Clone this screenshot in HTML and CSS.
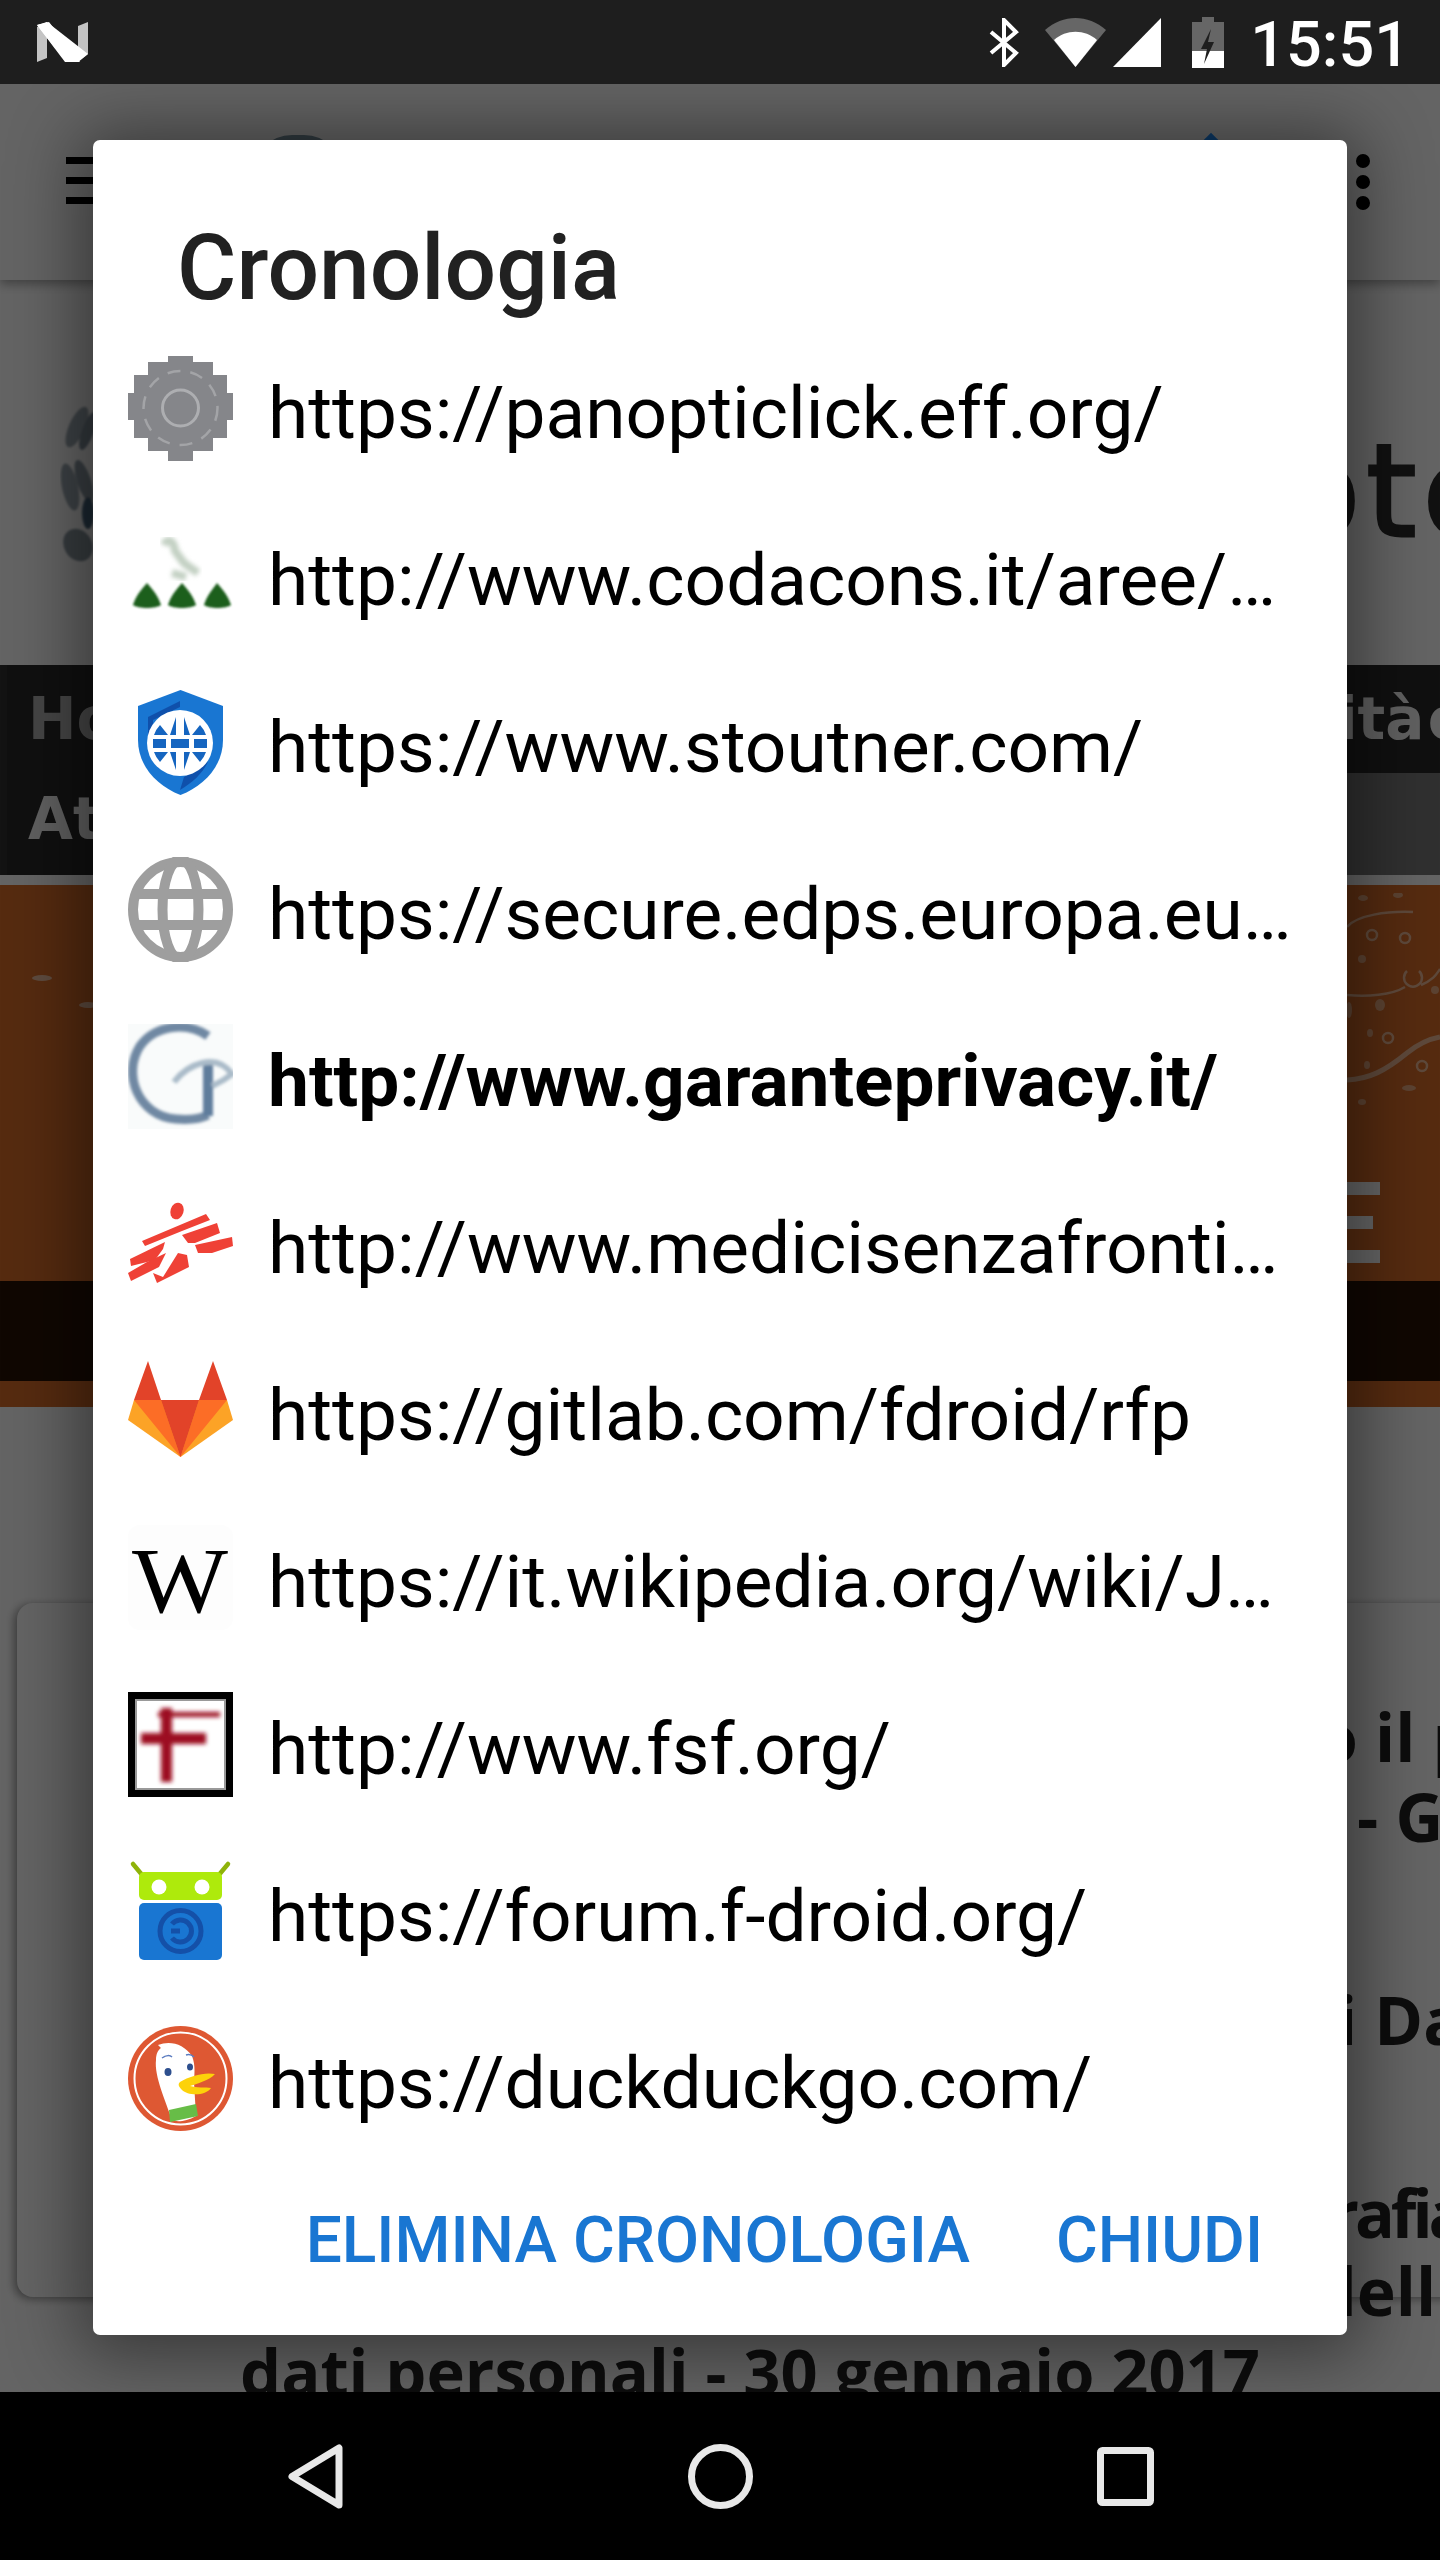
FILE: index.html
```html
<!DOCTYPE html>
<html lang="it">
<head>
<meta charset="utf-8">
<title>Cronologia</title>
<link rel="stylesheet" href="styles.css">
</head>
<body>
<header class="status">
  <svg class="st-n" viewBox="0 0 51 40"><path d="M0 5 10 0V36L0 40z" fill="#c4c4c4"/><path d="M41 4 51 0V32L41 40z" fill="#c4c4c4"/><path d="M0 3 10 0 51 32 41 40 28 40z" fill="#fff"/><path d="M0 3 12 0 43 40H29z" fill="#fff"/></svg>
  <div class="st-right">
    <svg class="st-bt" viewBox="0 0 30 49"><path d="M2 14 27 35 15 47V2l12 12L2 35" fill="none" stroke="#fff" stroke-width="4"/></svg>
    <svg class="st-wifi" viewBox="0 0 61 49"><path d="M0 12C18-4 43-4 61 12L30.500 49z" fill="#666"/><path d="M9 22C21 11 40 11 52 22L30.500 49z" fill="#fff"/></svg>
    <svg class="st-sig" viewBox="0 0 48 49"><path d="M48 0V49H0z" fill="#fff"/></svg>
    <svg class="st-bat" viewBox="0 0 32 51"><path d="M10 0h12v5h10v46H0V5h10z" fill="#666"/><path d="M0 34h32v17H0z" fill="#fff"/><path d="M19 12 9 32h6l-3 15 10-22h-6l3-13z" fill="#1e1e1e"/></svg>
    <span class="st-time">15:51</span>
  </div>
</header>

<main class="page">
  <div class="appbar">
    <div class="burger"><i></i><i></i><i></i></div>
    <span class="peek-logo"></span>
    <span class="peek-pin"></span>
    <div class="dots"><i></i><i></i><i></i></div>
  </div>
  <div class="brand">
    <svg class="emblem" viewBox="0 0 33 175"><defs><filter id="b0"><feGaussianBlur stdDeviation="1.200"/></filter></defs><g filter="url(#b0)" fill="#8a98a2"><ellipse cx="17" cy="32" rx="8" ry="22" transform="rotate(24 17 32)"/><ellipse cx="28" cy="36" rx="6" ry="20" transform="rotate(20 28 36)" fill="#6a7c8a"/><ellipse cx="10" cy="92" rx="8" ry="24" transform="rotate(-12 10 92)"/><ellipse cx="24" cy="86" rx="7" ry="22" transform="rotate(-18 24 86)" fill="#7a8a96"/><ellipse cx="28" cy="118" rx="6" ry="16" fill="#254a66"/><ellipse cx="18" cy="150" rx="14" ry="17" transform="rotate(-30 18 150)" fill="#76858f"/></g></svg>
    <div class="brand-text">ote</div>
  </div>
  <nav class="menu">
    <div class="menu-row"><span class="menu-home">Ho</span><span class="menu-end">vità e</span></div>
    <div class="menu-row menu-row-2"><span>Att</span></div>
  </nav>
  <div class="banner">
    <svg class="swirl-left" viewBox="0 0 93 60"><g fill="#fff" opacity=".55"><ellipse cx="42" cy="8" rx="10" ry="3"/><ellipse cx="88" cy="35" rx="9" ry="3"/></g></svg>
    <svg class="swirl" viewBox="0 0 93 240"><g fill="none" stroke="#fff" stroke-opacity=".5" stroke-width="2.500"><path d="M0 34C10 22 40 18 66 19"/><path d="M0 102C20 104 45 102 58 94"/><path d="M74 92C88 86 90 80 93 76"/><path d="M0 187C22 186 38 178 60 160 70 152 82 146 93 144" stroke-width="5"/><path d="M72 78A9 9 0 1 1 60 78" /><circle cx="25" cy="42" r="5"/><circle cx="58" cy="45" r="5"/><circle cx="41" cy="145" r="5"/><circle cx="75" cy="173" r="5"/></g><g fill="#fff" opacity=".4"><ellipse cx="16" cy="5" rx="5" ry="3"/><ellipse cx="51" cy="2" rx="5" ry="3"/><circle cx="15" cy="66" r="4"/><circle cx="88" cy="97" r="4"/><ellipse cx="33" cy="112" rx="5" ry="6"/><ellipse cx="2" cy="117" rx="3" ry="8"/><ellipse cx="23" cy="140" rx="3" ry="4"/><ellipse cx="20" cy="172" rx="3" ry="4"/><ellipse cx="62" cy="195" rx="7" ry="3"/><ellipse cx="15" cy="209" rx="4" ry="3"/></g></svg>
    <div class="e-bars"><i></i><i class="short"></i><i></i></div>
    <div class="banner-band"></div>
  </div>
  <section class="card">
    <p class="c1">o il p</p>
    <p class="c2">- G</p>
    <p class="c3">i Da</p>
    <p class="c4">rafia</p>
    <p class="c5">dell</p>
  </section>
  <p class="after">dati personali - 30 gennaio 2017</p>

  <div class="scrim">
    <div class="dialog">
      <h1 class="dlg-title">Cronologia</h1>
      <ul class="list">
        <li class="row">
          <svg class="ico" viewBox="0 0 105 105"><path d="M40 0h25v6h20v13h14v18h6v27h-6v18H85v13H65v10H40V95H20V82H6V64H0V37h6V19h14V6h20z" fill="#85868a"/><circle cx="52.500" cy="52" r="18" fill="none" stroke="#adaeb1" stroke-width="3"/><circle cx="52.500" cy="52" r="37" fill="none" stroke="#a3a4a7" stroke-width="2.500" stroke-dasharray="13 10"/></svg>
          <span class="url">https://panopticlick.eff.org/</span>
        </li>
        <li class="row">
          <svg class="ico" viewBox="0 0 105 105"><defs><filter id="b1"><feGaussianBlur stdDeviation="1"/></filter><filter id="b1b"><feGaussianBlur stdDeviation="2"/></filter></defs><g filter="url(#b1)" fill="#1e5e1e"><path d="M5 82C8 72 14 66 19 60 24 66 30 72 33 82 28 86 10 86 5 82z"/><path d="M40 82C43 72 49 66 54 60 59 66 65 72 68 82 63 86 45 86 40 82z"/><path d="M76 82C79 72 85 66 89 60 94 66 100 72 103 82 98 86 81 86 76 82z"/></g><g filter="url(#b1b)" fill="none" stroke="#c3d0c3" stroke-width="8"><path d="M36 22C40 14 46 18 47 28L56 40 70 50"/><path d="M44 50 58 54"/></g></svg>
          <span class="url">http://www.codacons.it/aree/…</span>
        </li>
        <li class="row">
          <svg class="ico" viewBox="0 0 105 105"><path d="M52.500 0 95 16V50C95 76 76 96 52.500 105 29 96 10 76 10 50V16z" fill="#1976d2"/><path d="M52 11 20 27V52H25V30L52 17zM52 100 56 87 80 72C74 84 64 93 52 100z" fill="#0d47a1" opacity=".8"/><circle cx="52" cy="53" r="33" fill="#fff"/><g fill="#1565c0"><path d="M26 45a27 27 0 0 1 6-10l8 10zM48 45V27L42 45zM56 45V27l6 18zM78 45a27 27 0 0 0-6-10l-8 10z"/><rect x="25" y="49" width="13" height="9"/><rect x="43" y="49" width="18" height="9"/><rect x="66" y="49" width="13" height="9"/><path d="M26 62a27 27 0 0 0 6 10l8-10zM48 62v18l-6-18zM56 62v18l6-18zM78 62a27 27 0 0 1-6 10l-8-10z"/></g></svg>
          <span class="url">https://www.stoutner.com/</span>
        </li>
        <li class="row">
          <svg class="ico" viewBox="0 0 105 105"><g fill="none" stroke="#9e9e9e" stroke-width="10"><circle cx="52.500" cy="52.500" r="47.500"/><ellipse cx="52.500" cy="52.500" rx="18" ry="50"/><path d="M8 37H97M8 68H97"/></g></svg>
          <span class="url">https://secure.edps.europa.eu…</span>
        </li>
        <li class="row">
          <svg class="ico" viewBox="0 0 105 105"><defs><filter id="b2"><feGaussianBlur stdDeviation="1.800"/></filter></defs><rect width="105" height="105" fill="#f9fbfb"/><g filter="url(#b2)" fill="none"><path d="M80 12C60-2 28 0 12 22-6 50 10 92 48 95c12 1 24 0 32-4" stroke="#6f88a3" stroke-width="9"/><path d="M80 40V92" stroke="#5f7d9c" stroke-width="10"/><path d="M46 58C60 40 88 28 104 50 94 58 88 60 84 62" stroke="#aabbc9" stroke-width="6"/></g></svg>
          <span class="url url-current">http://www.garanteprivacy.it/</span>
        </li>
        <li class="row">
          <svg class="ico" viewBox="0 0 105 105"><g fill="#ef4136"><ellipse cx="49" cy="20" rx="6.500" ry="8.500" transform="rotate(18 49 20)"/><path d="M14 50 78 23 82 29 54 40 17 55z"/><path d="M54 44 89 32 92 42 67 52 60 52z"/><path d="M67 54 104 46 105 55 84 62 70 62z"/><path d="M2 68 37 51 35 58 27 69 3 75z"/><path d="M0 82 19 71 38 62 31 76 3 90z"/><path d="M25 82 35 86 50 62 59 64 61 76 29 92z"/></g></svg>
          <span class="url">http://www.medicisenzafronti…</span>
        </li>
        <li class="row">
          <svg class="ico" viewBox="0 0 105 105"><path d="M0 62 6 42H99L105 62 52.500 99z" fill="#fca326"/><path d="M6 42H33L52.500 99zM99 42H71L52.500 99z" fill="#fc6d26"/><path d="M6 42 20 3 33 42zM99 42 85 3 71 42zM33 42H71L52.500 99z" fill="#e24329"/></svg>
          <span class="url">https://gitlab.com/fdroid/rfp</span>
        </li>
        <li class="row">
          <svg class="ico" viewBox="0 0 105 105"><rect width="105" height="105" rx="12" fill="#fdfdfd"/><text class="wiki" x="4" y="87" textLength="96" lengthAdjust="spacingAndGlyphs">W</text></svg>
          <span class="url">https://it.wikipedia.org/wiki/J…</span>
        </li>
        <li class="row">
          <svg class="ico" viewBox="0 0 105 105"><defs><filter id="b3"><feGaussianBlur stdDeviation="2"/></filter></defs><rect width="105" height="105" fill="#fff"/><rect x="8" y="8" width="89" height="89" fill="none" stroke="#999" stroke-width="2"/><rect x="3.500" y="3.500" width="98" height="98" fill="none" stroke="#000" stroke-width="7"/><g fill="#9c0f24" filter="url(#b3)"><rect x="30" y="20" width="62" height="5"/><rect x="13" y="41" width="65" height="11"/><rect x="33" y="16" width="11" height="74"/></g></svg>
          <span class="url">http://www.fsf.org/</span>
        </li>
        <li class="row">
          <svg class="ico" viewBox="0 0 105 105"><g stroke="#8fb30a" stroke-width="4.500" stroke-linecap="round"><path d="M5 5 15 17M100 5 90 17"/></g><rect x="11" y="13" width="83" height="28" rx="5" fill="#aeea0c"/><circle cx="31" cy="28" r="7.500" fill="#fff"/><circle cx="74" cy="28" r="7.500" fill="#fff"/><rect x="11" y="44" width="83" height="57" rx="5" fill="#1976d2"/><circle cx="52.500" cy="72" r="20.500" fill="none" stroke="#1450a8" stroke-width="5"/><path d="M44 65A11 11 0 1 1 44 79M43 72H52" fill="none" stroke="#1450a8" stroke-width="5"/></svg>
          <span class="url">https://forum.f-droid.org/</span>
        </li>
        <li class="row">
          <svg class="ico" viewBox="0 0 105 105"><circle cx="52.500" cy="52.500" r="52.500" fill="#de5833"/><circle cx="52.500" cy="52.500" r="46" fill="none" stroke="#fff" stroke-width="2"/><path d="M30 19C42 14 56 18 64 30 68 40 66 50 66 56L68 90C58 96 48 96 44 94 38 76 26 50 28 34 28 28 30 24 33 22z" fill="#fff"/><ellipse cx="40" cy="46" rx="3.500" ry="4" fill="#2d4f8e"/><ellipse cx="62" cy="41" rx="3" ry="3.500" fill="#2d4f8e"/><path d="M34 32C38 29 42 29 44 31M58 29C61 28 64 29 66 31" fill="none" stroke="#5b7cc0" stroke-width="1.500"/><path d="M52 56C62 50 76 46 87 48 82 54 68 58 62 60 68 62 78 61 83 62 78 70 60 70 54 64 50 60 50 58 52 56z" fill="#fdd20a"/><path d="M41 84 68 78 70 90 42 96z" fill="#67bd47"/></svg>
          <span class="url">https://duckduckgo.com/</span>
        </li>
      </ul>
      <div class="actions">
        <span class="btn">ELIMINA CRONOLOGIA</span>
        <span class="btn">CHIUDI</span>
      </div>
    </div>
  </div>
</main>

<footer class="navbar">
  <svg class="nv-back" viewBox="0 0 55 65"><path d="M51 4V61L4 32.500z" fill="none" stroke="#e8e8e8" stroke-width="7" stroke-linejoin="round"/></svg>
  <svg class="nv-home" viewBox="0 0 65 65"><circle cx="32.500" cy="32.500" r="29" fill="none" stroke="#e8e8e8" stroke-width="7"/></svg>
  <svg class="nv-rect" viewBox="0 0 57 59"><rect x="3.500" y="3.500" width="50" height="52" rx="2" fill="none" stroke="#e8e8e8" stroke-width="7"/></svg>
</footer>
</body>
</html>
```

FILE: styles.css
```css
* { box-sizing: border-box; }
html, body { margin: 0; padding: 0; }
body {
  width: 1440px;
  height: 2560px;
  overflow: hidden;
  display: flex;
  flex-direction: column;
  font-family: Roboto, "Liberation Sans", sans-serif;
  background: #000;
}

/* status bar */
.status {
  height: 84px;
  flex: none;
  background: #1e1e1e;
  display: flex;
  align-items: center;
  justify-content: space-between;
  padding: 0 30px 0 37px;
}
.st-n { width: 51px; height: 40px; margin-top: -1px; }
.st-right { display: flex; align-items: center; }
.st-bt { width: 30px; height: 49px; margin-right: 26px; }
.st-wifi { width: 61px; height: 49px; margin-right: 7px; }
.st-sig { width: 48px; height: 49px; margin-right: 31px; }
.st-bat { width: 32px; height: 51px; margin-right: 26px; }
.st-time { font-size: 63px; font-weight: 500; color: #fff; line-height: 84px; padding-top: 5px; }

/* page below the dim */
.page {
  position: relative;
  flex: 1;
  overflow: hidden;
  background: #fafafa;
}
.appbar {
  height: 196px;
  background: #fafafa;
  display: flex;
  justify-content: space-between;
  padding: 70px 70px 0 66px;
  box-shadow: 0 4px 10px rgba(0,0,0,.35);
  position: relative;
}
.burger { display: flex; flex-direction: column; gap: 13px; margin-top: 3px; }
.burger i { width: 40px; height: 7px; background: #000; }
.dots { display: flex; flex-direction: column; gap: 7px; }
.dots i { width: 14px; height: 14px; border-radius: 50%; background: #000; }
.peek-logo { position: absolute; left: 252px; top: 51px; width: 92px; height: 40px; border-radius: 46px 46px 0 0; background: #7a93a0; }
.peek-pin { position: absolute; left: 1203px; top: 52px; width: 16px; height: 16px; transform: rotate(45deg); background: #2090ff; }

.brand {
  height: 385px;
  display: flex;
  justify-content: space-between;
  position: relative;
}
.emblem { width: 33px; height: 175px; margin: 115px 0 0 60px; opacity: .85; }
.brand-text {
  font-family: "DejaVu Sans", sans-serif;
  font-size: 128px;
  line-height: 110px;
  letter-spacing: 6px;
  color: #2c2c2c;
  -webkit-text-stroke: 3px #2c2c2c;
  margin-top: 157px;
  width: 158px;
  white-space: nowrap;
}

.menu { height: 210px; background: #303030; padding-left: 7px; }
.menu-row {
  height: 108px;
  background: #282828;
  display: flex;
  justify-content: space-between;
  padding: 0 0 0 21px;
  font-family: "DejaVu Sans", sans-serif;
  font-weight: 700;
  font-size: 58px;
  line-height: 108px;
  color: #f0f0f0;
  white-space: nowrap;
}
.menu-home { color: #b0b0b0; }
.menu-end { margin-right: -27px; word-spacing: -17px; }
.menu-row-2 { height: 102px; line-height: 92px; background: linear-gradient(90deg, #282828 0 1000px, #787878 1000px); }

.banner {
  height: 522px;
  margin-top: 10px;
  background: #d66c28;
  position: relative;
  display: flex;
  flex-direction: column;
}
.swirl-left { position: absolute; left: 0; top: 85px; width: 93px; height: 60px; }
.swirl { position: absolute; right: 0; top: 8px; width: 93px; height: 240px; }
.e-bars { position: absolute; left: 1347px; top: 297px; display: flex; flex-direction: column; gap: 21px; }
.e-bars i { display: block; width: 33px; height: 13px; background: #fff; }
.e-bars .short { width: 26px; }
.banner-band { position: absolute; left: 0; right: 0; top: 396px; height: 100px; background: #2a1206; }

.card {
  margin: 196px 0 0 17px;
  width: 1500px;
  height: 694px;
  background: #fafafa;
  border-radius: 16px 0 0 16px;
  box-shadow: -3px 2px 8px rgba(0,0,0,.4);
  font-family: "Open Sans", sans-serif;
  font-weight: 700;
  font-size: 66px;
  line-height: 70px;
  color: #222;
  padding-left: 1300px;
  white-space: nowrap;
}
.card p { margin: 0; width: 200px; }
.c1 { padding-top: 98px; }
.c2 { padding-top: 10px; padding-left: 40px; }
.c3 { padding-top: 133px; padding-left: 20px; }
.card .c4 { padding-top: 123px; margin-left: 12px; letter-spacing: -4px; }
.card .c5 { padding-top: 8px; margin-left: -2px; }
.after {
  margin: 39px 0 0 240px;
  font-family: "Open Sans", sans-serif;
  font-weight: 700;
  font-size: 65px;
  line-height: 70px;
  color: #222;
  white-space: nowrap;
}

/* modal */
.scrim {
  position: absolute;
  inset: 0;
  background: rgba(0,0,0,.6);
  padding: 56px 93px 0;
}
.dialog {
  width: 1254px;
  height: 2195px;
  background: #fff;
  border-radius: 7px;
  box-shadow: 0 6px 70px 14px rgba(0,0,0,.45);
  display: flex;
  flex-direction: column;
}
.dlg-title {
  margin: 0;
  font-size: 91px;
  font-weight: 500;
  line-height: 100px;
  color: #212121;
  padding: 78px 0 0 84px;
  height: 185px;
}
.list { list-style: none; margin: 0; padding: 0; }
.row {
  height: 167px;
  display: flex;
  align-items: center;
  padding-left: 35px;
}
.ico { width: 105px; height: 105px; flex: none; margin-right: 35px; }
.url {
  font-size: 73px;
  line-height: 100px;
  padding-top: 9px;
  color: #000;
  white-space: nowrap;
}
.url-current { font-weight: 700; }
.wiki { font-family: "Liberation Serif", serif; font-size: 94px; fill: #000; }
.actions {
  display: flex;
  justify-content: flex-end;
  gap: 86px;
  padding: 29px 84px 0 0;
}
.btn {
  font-size: 64px;
  font-weight: 500;
  line-height: 100px;
  color: #1976d2;
  white-space: nowrap;
}

/* nav bar */
.navbar {
  height: 168px;
  flex: none;
  background: #000;
  position: relative;
  z-index: 2;
  display: flex;
  align-items: center;
  padding-left: 288px;
}
.nv-back { width: 55px; height: 65px; }
.nv-home { width: 65px; height: 65px; margin-left: 345px; }
.nv-rect { width: 57px; height: 59px; margin-left: 344px; }
```
